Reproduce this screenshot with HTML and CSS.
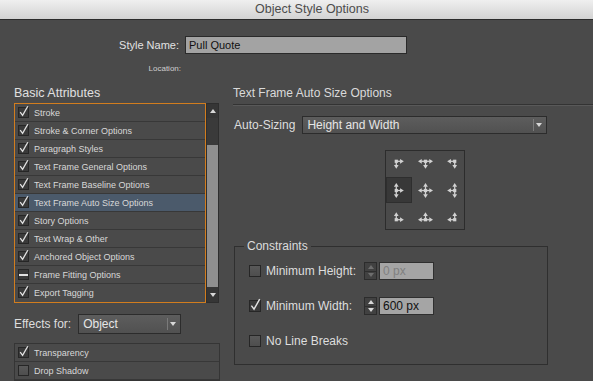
FILE: index.html
```html
<!DOCTYPE html>
<html lang="en">
<head>
    <meta charset="UTF-8">
    <meta name="viewport" content="width=device-width, initial-scale=1.0">
    <title>Object Style Options</title>
    <link rel="stylesheet" href="styles.css">
</head>
<body>
    <svg class="defs" width="0" height="0">
        <defs>
            <g id="a-r"><path d="M0 0H4" stroke="#d2d2d2" stroke-width="1.2"/><path d="M3.5 -2.2L7 0L3.5 2.2Z" fill="#d2d2d2"/></g>
            <g id="a-l"><path d="M0 0H-4" stroke="#d2d2d2" stroke-width="1.2"/><path d="M-3.5 -2.2L-7 0L-3.5 2.2Z" fill="#d2d2d2"/></g>
            <g id="a-d"><path d="M0 0V4" stroke="#d2d2d2" stroke-width="1.2"/><path d="M-2.2 3.5L0 7L2.2 3.5Z" fill="#d2d2d2"/></g>
            <g id="a-u"><path d="M0 0V-4" stroke="#d2d2d2" stroke-width="1.2"/><path d="M-2.2 -3.5L0 -7L2.2 -3.5Z" fill="#d2d2d2"/></g>
            <rect id="anchor" x="-1.5" y="-1.5" width="3" height="3" fill="#d2d2d2"/>
        </defs>
    </svg>

    <div class="titlebar">Object Style Options</div>

    <div class="name-row">
        <span class="name-label">Style Name:</span>
        <div class="text-field">Pull Quote</div>
    </div>
    <div class="location-row">Location:</div>

    <div class="columns">
        <div class="left">
            <div class="group-title">Basic Attributes</div>
            <div class="attr-box">
                <ul class="attr-list">
                    <li class="attr-row"><span class="check on"><svg viewBox="0 0 11 11"><path d="M2.2 5.2L4.6 8.4L9.8 -0.8"/></svg></span>Stroke</li>
                    <li class="attr-row"><span class="check on"><svg viewBox="0 0 11 11"><path d="M2.2 5.2L4.6 8.4L9.8 -0.8"/></svg></span>Stroke &amp; Corner Options</li>
                    <li class="attr-row"><span class="check on"><svg viewBox="0 0 11 11"><path d="M2.2 5.2L4.6 8.4L9.8 -0.8"/></svg></span>Paragraph Styles</li>
                    <li class="attr-row"><span class="check on"><svg viewBox="0 0 11 11"><path d="M2.2 5.2L4.6 8.4L9.8 -0.8"/></svg></span>Text Frame General Options</li>
                    <li class="attr-row"><span class="check on"><svg viewBox="0 0 11 11"><path d="M2.2 5.2L4.6 8.4L9.8 -0.8"/></svg></span>Text Frame Baseline Options</li>
                    <li class="attr-row selected"><span class="check on"><svg viewBox="0 0 11 11"><path d="M2.2 5.2L4.6 8.4L9.8 -0.8"/></svg></span>Text Frame Auto Size Options</li>
                    <li class="attr-row"><span class="check on"><svg viewBox="0 0 11 11"><path d="M2.2 5.2L4.6 8.4L9.8 -0.8"/></svg></span>Story Options</li>
                    <li class="attr-row"><span class="check on"><svg viewBox="0 0 11 11"><path d="M2.2 5.2L4.6 8.4L9.8 -0.8"/></svg></span>Text Wrap &amp; Other</li>
                    <li class="attr-row"><span class="check on"><svg viewBox="0 0 11 11"><path d="M2.2 5.2L4.6 8.4L9.8 -0.8"/></svg></span>Anchored Object Options</li>
                    <li class="attr-row"><span class="check mixed"><span class="dash"></span></span>Frame Fitting Options</li>
                    <li class="attr-row"><span class="check on"><svg viewBox="0 0 11 11"><path d="M2.2 5.2L4.6 8.4L9.8 -0.8"/></svg></span>Export Tagging</li>
                </ul>
                <div class="scrollbar">
                    <div class="scroll-btn"><span class="tri-up"></span></div>
                    <div class="track"></div>
                    <div class="thumb"></div>
                    <div class="scroll-btn bottom"><span class="tri-down"></span></div>
                </div>
            </div>

            <div class="effects-row">
                <span>Effects for:</span>
                <div class="select small">
                    <span class="select-text">Object</span>
                    <span class="select-arrow"><span class="tri-down"></span></span>
                </div>
            </div>
            <ul class="effects-list">
                <li class="attr-row"><span class="check on"><svg viewBox="0 0 11 11"><path d="M2.2 5.2L4.6 8.4L9.8 -0.8"/></svg></span>Transparency</li>
                <li class="attr-row"><span class="check off"></span>Drop Shadow</li>
            </ul>
        </div>

        <div class="right">
            <div class="section-title">Text Frame Auto Size Options</div>
            <div class="autosize-row">
                <span>Auto-Sizing</span>
                <div class="select wide">
                    <span class="select-text">Height and Width</span>
                    <span class="select-arrow"><span class="tri-down"></span></span>
                </div>
            </div>

            <div class="icon-grid">
                <div class="cell"><svg class="icon" viewBox="-4 -4 14 14"><use href="#a-r"/><use href="#a-d"/><use href="#anchor"/></svg></div>
                <div class="cell"><svg class="icon" viewBox="-7 -4 14 14"><use href="#a-l"/><use href="#a-r"/><use href="#a-d"/><use href="#anchor"/></svg></div>
                <div class="cell"><svg class="icon" viewBox="-10 -4 14 14"><use href="#a-l"/><use href="#a-d"/><use href="#anchor"/></svg></div>
                <div class="cell selected"><svg class="icon" viewBox="-4 -7 14 14"><use href="#a-u"/><use href="#a-d"/><use href="#a-r"/><use href="#anchor"/></svg></div>
                <div class="cell"><svg class="icon" viewBox="-7 -7 14 14"><use href="#a-u"/><use href="#a-d"/><use href="#a-l"/><use href="#a-r"/><use href="#anchor"/></svg></div>
                <div class="cell"><svg class="icon" viewBox="-10 -7 14 14"><use href="#a-u"/><use href="#a-d"/><use href="#a-l"/><use href="#anchor"/></svg></div>
                <div class="cell"><svg class="icon" viewBox="-4 -10 14 14"><use href="#a-u"/><use href="#a-r"/><use href="#anchor"/></svg></div>
                <div class="cell"><svg class="icon" viewBox="-7 -10 14 14"><use href="#a-u"/><use href="#a-l"/><use href="#a-r"/><use href="#anchor"/></svg></div>
                <div class="cell"><svg class="icon" viewBox="-10 -10 14 14"><use href="#a-u"/><use href="#a-l"/><use href="#anchor"/></svg></div>
            </div>

            <fieldset class="constraints">
                <legend>Constraints</legend>
                <div class="constraint-row">
                    <span class="check large off"></span>
                    <span class="constraint-label">Minimum Height:</span>
                    <span class="spinner disabled"><span class="half"><span class="tri-up"></span></span><span class="half"><span class="tri-down"></span></span></span>
                    <span class="num-field disabled">0 px</span>
                </div>
                <div class="constraint-row">
                    <span class="check large on"><svg viewBox="0 0 11 11"><path d="M2.2 5.2L4.6 8.4L9.8 -0.8"/></svg></span>
                    <span class="constraint-label">Minimum Width:</span>
                    <span class="spinner"><span class="half"><span class="tri-up"></span></span><span class="half"><span class="tri-down"></span></span></span>
                    <span class="num-field">600 px</span>
                </div>
                <div class="constraint-row">
                    <span class="check large off"></span>
                    <span class="constraint-label">No Line Breaks</span>
                </div>
            </fieldset>
        </div>
    </div>
</body>
</html>
```

FILE: styles.css
```css
body {
    margin: 0;
    height: 381px;
    overflow: hidden;
    background-color: #4a4a4a;
    color: #dcdcdc;
    font-family: "Liberation Sans", Arial, sans-serif;
}
.defs {
    display: block;
    width: 0;
    height: 0;
    overflow: hidden;
}
ul {
    list-style: none;
    margin: 0;
    padding: 0;
}

.titlebar {
    height: 19px;
    line-height: 19px;
    padding-left: 31px;
    border-bottom: 1px solid #2c2c2c;
    background: linear-gradient(#efefef, #d3d3d3);
    color: #4c4c4c;
    font-size: 12.5px;
    text-align: center;
}

.name-row {
    display: flex;
    align-items: center;
    margin-top: 16px;
}
.name-label {
    width: 179px;
    margin-right: 6px;
    text-align: right;
    font-size: 11px;
    color: #e2e2e2;
}
.text-field {
    width: 222px;
    height: 18px;
    box-sizing: border-box;
    padding-left: 3px;
    border: 1px solid #2a2a2a;
    background-color: #a3a3a3;
    color: #111;
    font-size: 11px;
    line-height: 16px;
}
.location-row {
    width: 181px;
    margin-top: 10px;
    text-align: right;
    font-size: 8px;
    line-height: 10px;
    color: #cfcfcf;
}

.columns {
    display: flex;
    margin-top: 12px;
}
.left {
    width: 205px;
    margin-left: 14px;
}
.group-title {
    font-size: 12.5px;
    line-height: 14px;
    color: #e0e0e0;
}
.attr-box {
    display: flex;
    margin-top: 3px;
}
.attr-list {
    width: 192px;
    border: 1px solid #d27d1e;
}
.attr-row {
    display: flex;
    align-items: center;
    gap: 5px;
    height: 17px;
    padding-left: 3px;
    border-bottom: 1px solid #383838;
    font-size: 9px;
    color: #d8d8d8;
}
.attr-list .attr-row:last-child {
    border-bottom: none;
}
.attr-row.selected {
    background-color: #4b5a6b;
}

.check {
    display: flex;
    flex: none;
    width: 11px;
    height: 11px;
    box-sizing: border-box;
    border: 1px solid #262626;
    background-color: #3a3a3a;
}
.check svg {
    width: 11px;
    height: 11px;
    margin: -1px 0 0 -1px;
    overflow: visible;
}
.check path {
    fill: none;
    stroke: #e2e2e2;
    stroke-width: 1.3;
}
.check.off {
    background: linear-gradient(#595959, #4e4e4e);
}
.check.large {
    width: 12px;
    height: 12px;
}
.check.large svg {
    width: 12px;
    height: 12px;
}
.check.mixed {
    align-items: center;
    justify-content: center;
}
.dash {
    width: 9px;
    height: 2px;
    background-color: #e0e0e0;
}

.scrollbar {
    display: flex;
    flex-direction: column;
    width: 13px;
    height: 200px;
    box-sizing: border-box;
    border: 1px solid #2e2e2e;
    background-color: #363636;
}
.scroll-btn {
    display: flex;
    justify-content: center;
    align-items: center;
    height: 14px;
}
.scroll-btn.bottom {
    height: 15px;
}
.track {
    height: 27px;
    background-color: #3a3a3a;
}
.thumb {
    flex: 1;
    background-color: #8f8f8f;
}

.tri-up {
    width: 0;
    height: 0;
    border-left: 3.5px solid transparent;
    border-right: 3.5px solid transparent;
    border-bottom: 4px solid #d8d8d8;
}
.tri-down {
    width: 0;
    height: 0;
    border-left: 3.5px solid transparent;
    border-right: 3.5px solid transparent;
    border-top: 4px solid #d8d8d8;
}

.effects-row {
    display: flex;
    align-items: center;
    gap: 7px;
    margin-top: 11px;
    font-size: 12px;
    color: #dedede;
}
.select {
    display: flex;
    align-items: center;
    box-sizing: border-box;
    border: 1px solid #2c2c2c;
    background: linear-gradient(#5d5d5d, #515151);
    color: #e6e6e6;
    font-size: 12px;
}
.select.small {
    width: 103px;
    height: 20px;
}
.select.wide {
    width: 245px;
    height: 18px;
}
.select-text {
    flex: 1;
    padding-left: 4px;
}
.select-arrow {
    display: flex;
    align-items: center;
    justify-content: center;
    width: 10px;
    height: 12px;
    margin-right: 2px;
    border-left: 1px solid #7a7a7a;
}
.effects-list {
    width: 204px;
    margin-top: 9px;
    border: 1px solid #353535;
}

.right {
    flex: 1;
    margin-left: 14px;
}
.section-title {
    padding-bottom: 4px;
    border-bottom: 1px solid #333;
    box-shadow: 0 1px 0 #595959;
    font-size: 12px;
    line-height: 14px;
    color: #dadada;
}
.autosize-row {
    display: flex;
    align-items: center;
    gap: 7px;
    margin-top: 11px;
    padding-left: 1px;
    font-size: 12px;
    color: #dedede;
}

.icon-grid {
    display: grid;
    grid-template-columns: repeat(3, 26px);
    grid-template-rows: repeat(3, 26px);
    width: 80px;
    height: 80px;
    box-sizing: border-box;
    margin: 16px 0 0 152px;
    border: 1px solid #2c2c2c;
}
.cell {
    display: flex;
    align-items: center;
    justify-content: center;
    box-sizing: border-box;
}
.cell.selected {
    border: 1px solid #2e2e2e;
    background-color: #383838;
}
.icon {
    width: 15px;
    height: 15px;
}

.constraints {
    width: 314px;
    box-sizing: border-box;
    margin: 9px 0 0 1px;
    padding: 9px 14px 14px;
    border: 1px solid #2f2f2f;
}
.constraints legend {
    margin-left: -5px;
    padding: 0 3px;
    font-size: 12px;
    line-height: 14px;
    color: #dcdcdc;
}
.constraint-row {
    display: flex;
    align-items: center;
    height: 18px;
    font-size: 12px;
    color: #dedede;
}
.constraint-row + .constraint-row {
    margin-top: 17px;
}
.constraint-label {
    width: 98px;
    margin-left: 5px;
}
.spinner {
    display: flex;
    flex-direction: column;
    width: 13px;
    height: 18px;
    box-sizing: border-box;
    margin-right: 2px;
    border: 1px solid #2c2c2c;
    background-color: #414141;
}
.half {
    display: flex;
    flex: 1;
    align-items: center;
    justify-content: center;
}
.half + .half {
    border-top: 1px solid #2e2e2e;
}
.spinner.disabled .tri-up {
    border-bottom-color: #6e6e6e;
}
.spinner.disabled .tri-down {
    border-top-color: #6e6e6e;
}
.num-field {
    width: 55px;
    height: 18px;
    box-sizing: border-box;
    padding-left: 3px;
    border: 1px solid #2f2f2f;
    background-color: #a5a5a5;
    color: #111;
    font-size: 12px;
    line-height: 16px;
}
.num-field.disabled {
    color: #808080;
}
```
